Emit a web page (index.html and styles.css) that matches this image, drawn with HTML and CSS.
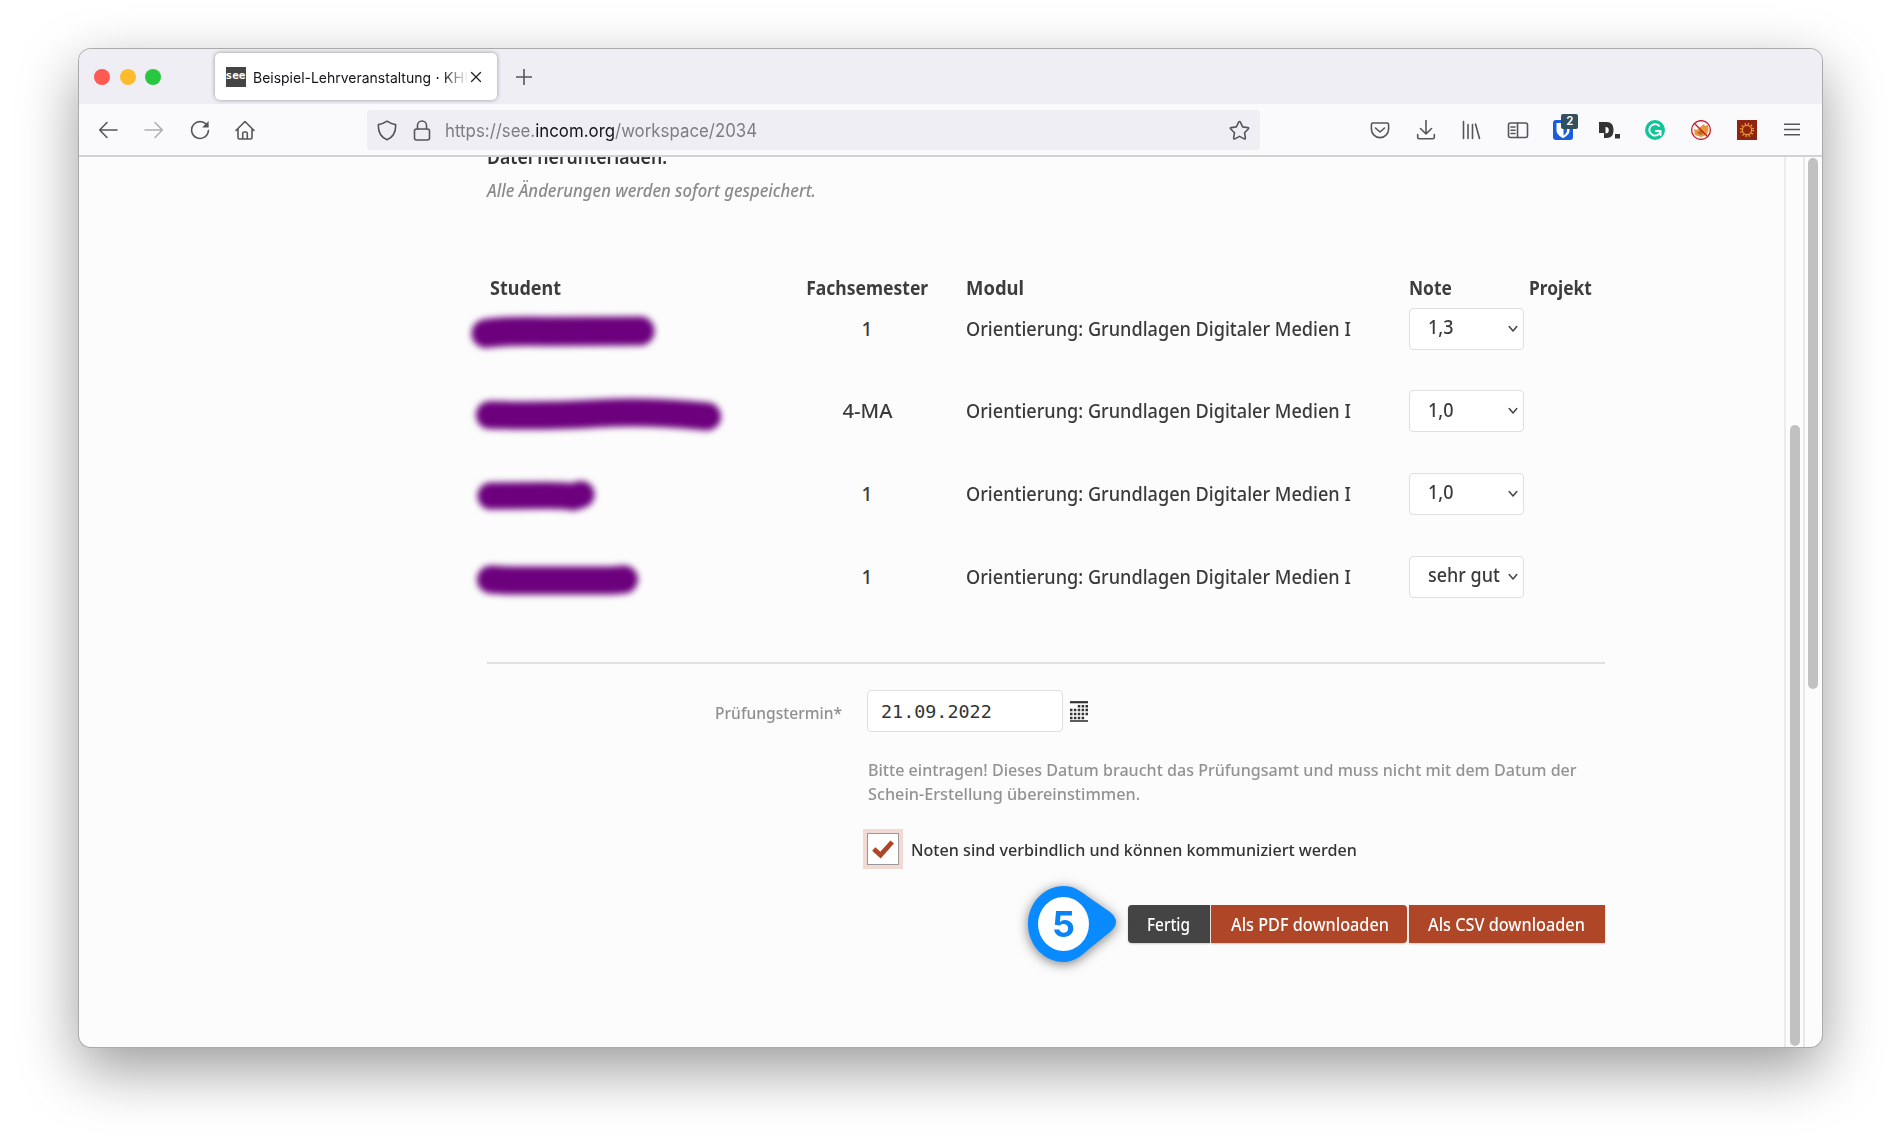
FILE: index.html
```html
<!DOCTYPE html>
<html lang="de">
<head>
<meta charset="utf-8">
<title>Beispiel-Lehrveranstaltung</title>
<link rel="stylesheet" href="styles.css">
</head>
<body>
<div class="window">
  <header class="tabstrip">
    <div class="lights"><i class="red"></i><i class="yellow"></i><i class="green"></i></div>
    <div class="tab">
      <span class="favicon">see</span>
      <span class="tab-title"><span class="fit t-tab">Beispiel-Lehrveranstaltung</span></span><span class="tab-rest">· KHÜ</span>
      <svg class="close" width="12" height="12" viewBox="0 0 12 12"><path d="M1.500 1.500l9 9m0-9l-9 9"/></svg>
    </div>
    <svg class="plus" width="16" height="16" viewBox="0 0 16 16"><path d="M8 .5v15M.5 8h15"/></svg>
  </header>
  <nav class="toolbar">
    <div class="group">
      <span class="tool"><svg width="20" height="20" viewBox="0 0 20 20"><path d="M19 10H2M9 2.500L1.700 10 9 17.500"/></svg></span>
      <span class="tool dim"><svg width="20" height="20" viewBox="0 0 20 20"><path d="M1 10h17M11 2.500L18.300 10 11 17.500"/></svg></span>
      <span class="tool"><svg width="20" height="20" viewBox="0 0 20 20"><path d="M17.500 6.200A8.400 8.400 0 1 0 18.400 10.500"/><path class="solid" d="M18.600 1v6.500h-6.500z"/></svg></span>
      <span class="tool"><svg width="20" height="20" viewBox="0 0 20 20"><path d="M1 10.500L10 1.500l9 9M3 9v8.500q0 1.500 1.500 1.500h11q1.500 0 1.500-1.500V9M7.700 19v-5.500q0-1.500 1.500-1.500h1.600q1.500 0 1.500 1.500V19"/></svg></span>
    </div>
    <div class="urlbar">
      <svg width="20" height="21" viewBox="0 0 20 21"><path d="M10 1.200C12.500 3 15 4 18.600 4.600 19 11 16.500 17 10 19.800 3.500 17 1 11 1.400 4.600 5 4 7.500 3 10 1.200z"/></svg>
      <svg class="lock" width="18" height="21" viewBox="0 0 18 21"><rect x="1.500" y="9" width="15" height="11" rx="2"/><path d="M4.500 9V5.500a4.500 4.500 0 0 1 9 0V9"/></svg>
      <span class="url"><span class="fit t-url">https://see.<b>incom.org</b>/workspace/2034</span></span>
      <svg class="star" width="21" height="21" viewBox="0 0 21 21"><path d="M10.500 1.500q.6 0 .9.700l2.200 4.700 5.200.7q1.400.3.500 1.400l-3.800 3.700.9 5.200q.1 1.500-1.200 1l-4.700-2.500-4.700 2.500q-1.300.5-1.200-1l.9-5.200L1.700 9q-.9-1.100.5-1.400l5.200-.7 2.200-4.700q.3-.7.900-.7z"/></svg>
    </div>
    <div class="group end">
      <span class="tool"><svg width="20" height="20" viewBox="0 0 20 20"><path d="M3 3h14q1.600 0 1.600 1.600V9a8.600 8.600 0 0 1-17.200 0V4.600Q1.400 3 3 3zM5.500 8l4.500 4 4.500-4"/></svg></span>
      <span class="tool"><svg width="20" height="20" viewBox="0 0 20 20"><path d="M10 0v13.500M4.500 8.500L10 14l5.500-5.500M1.700 14.500v2.800q0 1.500 1.500 1.500h13.600q1.500 0 1.500-1.500v-2.800"/></svg></span>
      <span class="tool"><svg width="20" height="20" viewBox="0 0 20 20"><path d="M1.500 1.500v17M6 4.500v14M10.500 4.500v14M13.500 4l4 14.500"/></svg></span>
      <span class="tool"><svg width="22" height="20" viewBox="0 0 22 20"><rect x="1.500" y="3" width="19" height="14.500" rx="2"/><path d="M10.500 3v14.500M4 7h4M4 10.300h4M4 13.500h4"/></svg></span>
      <span class="tool badge-host"><svg width="20" height="20" viewBox="0 0 20 20"><rect class="bw" width="20" height="20" rx="3"/><path class="white" d="M3.500 3h13v7.500c0 3.500-3.500 6-6.500 7.800-3-1.800-6.500-4.300-6.500-7.800z"/><path class="bw" d="M10.500 5h3.500v5.500c0 2-1.500 3.600-3.500 5z"/></svg><em class="badge">2</em></span>
      <span class="tool"><svg width="22" height="20" viewBox="0 0 22 20"><path class="ink" fill-rule="evenodd" d="M1 2h7.500c5 0 7 3 7 8s-2 8-7 8H6v-5H1zM7.500 7v6.500q3.300 0 3.300-3.300T7.500 7z"/><rect class="ink" x="17" y="14" width="5" height="4.500"/></svg></span>
      <span class="tool"><svg width="20" height="20" viewBox="0 0 20 20"><circle class="gr" cx="10" cy="10" r="10"/><path class="gline" d="M14 5.800A5.700 5.700 0 1 0 15.600 11H11M15.600 11v4"/></svg></span>
      <span class="tool"><svg width="22" height="20" viewBox="0 0 22 20"><path class="fox" d="M4 9l3 1 3-3 4-3 1 2 3-1 .5 5-2 5-5.500 2-6-2z"/><path class="fox2" d="M7 13l4-3 3 2-3 3z"/><circle class="ban" cx="11" cy="10" r="9.400"/><path class="ban" d="M4.500 3.500l13 13"/></svg></span>
      <span class="tool"><svg width="20" height="20" viewBox="0 0 20 20"><rect class="rust" width="20" height="20"/><circle class="gear" cx="10" cy="10" r="4.600"/><circle class="teeth" cx="10" cy="10" r="6.200"/></svg></span>
      <span class="tool"><svg width="16" height="16" viewBox="0 0 16 16"><path d="M.5 2.200h15M.5 7.500h15M.5 12.800h15"/></svg></span>
    </div>
  </nav>
  <div class="viewport">
    <main>
      <p class="lead"><span class="fit t-lead">Datei herunterladen.</span></p>
      <p class="saved"><span class="fit t-saved">Alle Änderungen werden sofort gespeichert.</span></p>
      <div class="grid head">
        <span class="pad"><span class="fit t-student">Student</span></span>
        <span class="mid"><span class="fit t-semester">Fachsemester</span></span>
        <span><span class="fit t-modul">Modul</span></span>
        <span><span class="fit t-note">Note</span></span>
        <span><span class="fit t-note">Projekt</span></span>
      </div>
      <div class="grid row">
        <svg class="blot" width="281" height="42"><path stroke-width="29" d="M-1 25.500Q20 22.500 60 23.500L153 23"/></svg>
        <span class="mid">1</span>
        <span><span class="fit t-cell">Orientierung: Grundlagen Digitaler Medien I</span></span>
        <span class="select"><span class="fit t-grade">1,3</span><svg width="10" height="8" viewBox="0 0 10 8"><path d="M1.200 1.500L5 6l3.800-4.500"/></svg></span>
      </div>
      <div class="grid row">
        <svg class="blot" width="281" height="42"><path stroke-width="28" d="M3 25Q60 26.500 110 23.500T220 26.500"/></svg>
        <span class="mid"><span class="fit t-ma">4-MA</span></span>
        <span><span class="fit t-cell">Orientierung: Grundlagen Digitaler Medien I</span></span>
        <span class="select"><span class="fit t-grade">1,0</span><svg width="10" height="8" viewBox="0 0 10 8"><path d="M1.200 1.500L5 6l3.800-4.500"/></svg></span>
      </div>
      <div class="grid row">
        <svg class="blot" width="281" height="42"><path stroke-width="27" d="M4 23L60 22.500Q78 22.500 86 24L94 21.500"/></svg>
        <span class="mid">1</span>
        <span><span class="fit t-cell">Orientierung: Grundlagen Digitaler Medien I</span></span>
        <span class="select"><span class="fit t-grade">1,0</span><svg width="10" height="8" viewBox="0 0 10 8"><path d="M1.200 1.500L5 6l3.800-4.500"/></svg></span>
      </div>
      <div class="grid row">
        <svg class="blot" width="281" height="42"><path stroke-width="28" d="M4 23.500L20 24.500 125 24.500 137 23.500"/></svg>
        <span class="mid">1</span>
        <span><span class="fit t-cell">Orientierung: Grundlagen Digitaler Medien I</span></span>
        <span class="select"><span class="fit t-grade">sehr gut</span><svg width="10" height="8" viewBox="0 0 10 8"><path d="M1.200 1.500L5 6l3.800-4.500"/></svg></span>
      </div>
      <hr>
      <div class="field">
        <label><span class="fit t-label">Prüfungstermin*</span></label>
        <span class="date">21.09.2022</span>
        <svg class="cal" width="18" height="21" viewBox="0 0 18 21"><path d="M0 1.200h18"/><path class="thin" d="M0 20h18"/><path class="dots" d="M7.800 5.200h10.200M0 9.100h18M0 13h18M0 16.900h14.500"/></svg>
      </div>
      <div class="hint">
        <span class="fit t-hint">Bitte eintragen! Dieses Datum braucht das Prüfungsamt und muss nicht mit dem Datum der</span><br>
        <span class="fit t-hint2">Schein-Erstellung übereinstimmen.</span>
      </div>
      <div class="check">
        <span class="box"><svg width="22" height="19" viewBox="0 0 22 19"><path d="M1.800 9l6.700 6L20.200 2"/></svg></span>
        <span class="fit t-check">Noten sind verbindlich und können kommuniziert werden</span>
      </div>
      <div class="actions">
        <svg class="marker" width="90" height="78" viewBox="0 0 90 78"><path class="drop" d="M36 1C45 1 51 5 59 11L82 27Q88 32 88 37T82 47L61 64C52 72 45 77 36 77 16 77 0 60 0 39S16 1 36 1z"/><ellipse class="white" cx="35.500" cy="39" rx="25.500" ry="27"/><text x="35.500" y="52" text-anchor="middle">5</text></svg>
        <span class="btn dark"><span class="fit t-fertig">Fertig</span></span>
        <span class="btn pdf"><span class="fit t-btn">Als PDF downloaden</span></span>
        <span class="btn"><span class="fit t-btn">Als CSV downloaden</span></span>
      </div>
    </main>
    <div class="track inner"><i></i></div>
    <div class="track outer"><i></i></div>
  </div>
</div>
</body>
</html>
```
FILE: styles.css
```css
* { box-sizing: border-box; }
body { margin: 0; height: 1141px; overflow: hidden; background: #fff; font-family: "Noto Sans", sans-serif; font-weight: 500; color: #3a3a3a; display: flow-root; }
svg { display: block; flex: none; fill: none; stroke: #55555d; stroke-width: 1.6; stroke-linecap: round; stroke-linejoin: round; }
.window { width: 1743.500px; height: 998px; margin: 49px 0 0 78.500px; border-radius: 12px; overflow: hidden; background: #fcfcfc; display: flex; flex-direction: column; box-shadow: 0 0 0 1px #aaa, 0 22px 60px rgba(0,0,0,.4); }

/* Condensed text: each class sets the horizontal scale of its label */
.fit { display: inline-block; white-space: nowrap; transform-origin: 0 50%; }
.t-tab { transform: scaleX(.964); }
.t-url { transform: scaleX(.936); }
.t-lead { transform: scaleX(.929); }
.t-saved { transform: scaleX(.927); }
.t-student { transform: scaleX(.946); }
.t-semester { transform: scaleX(.922); transform-origin: 50% 50%; }
.t-modul { transform: scaleX(.970); }
.t-note { transform: scaleX(.912); }
.t-cell { transform: scaleX(.953); }
.t-grade { transform: scaleX(.945); }
.t-ma { transform: scaleX(1.067); transform-origin: 50% 50%; }
.t-label { transform: scaleX(.917); }
.t-hint { transform: scaleX(.946); }
.t-hint2 { transform: scaleX(.955); }
.t-check { transform: scaleX(.948); }
.t-fertig { transform: scaleX(.854); }
.t-btn { transform: scaleX(.903); }

.tabstrip { height: 55px; flex: none; background: #efeef4; display: flex; align-items: center; }
.lights { display: flex; gap: 9.500px; margin: 0 54px 0 15.500px; }
.lights i { width: 16px; height: 16px; border-radius: 50%; }
.red { background: #ff5a52; }
.yellow { background: #fdbc2e; }
.green { background: #27c840; }
.tab { width: 282px; height: 47px; border-radius: 5px; background: #fff; box-shadow: 0 0 4px rgba(0,0,0,.38); display: flex; align-items: center; padding-left: 10.500px; color: #15141a; font: 14.500px Inter, sans-serif; }
.favicon { width: 20px; height: 20px; background: #444; color: #fff; font: bold 11px/17px "DejaVu Sans Mono", monospace; text-align: center; margin-right: 7px; }
.tab-title { width: 183px; margin-top: 2px; }
.tab-rest { width: 32px; margin-top: 2px; overflow: hidden; white-space: nowrap; -webkit-mask-image: linear-gradient(90deg,#000 20%,transparent); mask-image: linear-gradient(90deg,#000 20%,transparent); }
.close { stroke: #222; stroke-width: 1.3; margin-left: 2px; }
.plus { margin-left: 19px; }

.toolbar { height: 53px; flex: none; background: #fafafc; border-bottom: 2px solid #d2d2d4; display: flex; align-items: center; padding-top: 1px; }
.group { display: flex; margin-left: 7px; }
.tool { width: 45.700px; display: flex; justify-content: center; align-items: center; }
.dim { opacity: .45; }
.solid { fill: #55555d; stroke: none; }
.urlbar { width: 893px; height: 40px; margin-left: 98.700px; background: #efeef3; border-radius: 4px; display: flex; align-items: center; padding: 0 10px; }
.lock { margin-left: 16px; }
.url { flex: 1; margin-left: 14.500px; font: 18px Inter, sans-serif; color: #7d7d84; }
.url b { font-weight: 400; color: #15141a; }
.end { margin-left: 97.300px; }
.end .tool { width: 45.800px; }
.badge-host { position: relative; }
.badge { position: absolute; left: 21px; top: -6px; width: 17px; height: 15px; border-radius: 2px; background: #33505f; color: #fff; font: 600 11.500px/15px Inter, sans-serif; text-align: center; }
.bw { fill: #175ddc; stroke: none; }
.white { fill: #fff; stroke: none; }
.ink { fill: #333; stroke: none; }
.gr { fill: #15c39a; stroke: none; }
.gline { stroke: #fff; stroke-width: 1.9; }
.fox { fill: #e8963a; stroke: none; }
.fox2 { fill: #b9692a; stroke: none; }
.ban { stroke: #cc1420; stroke-width: 1.3; }
.rust { fill: #8f2410; stroke: none; }
.gear { stroke: #e8993a; stroke-width: 1.3; }
.teeth { stroke: #e8993a; stroke-width: 2; stroke-dasharray: 1.3 1.95; stroke-linecap: butt; }

.viewport { flex: 1; min-height: 0; display: flex; overflow: hidden; }
main { width: 1118px; margin: -16.500px 179px 0 408px; flex: none; }
p { margin: 0; line-height: 33px; }
.lead { font-size: 19px; font-weight: 600; color: #333; }
.saved { font-size: 18px; font-style: italic; color: #8a8a8a; }
.grid { display: grid; grid-template-columns: 281px 198px 443.500px 120px 75px; font-size: 19px; }
.head { margin-top: 61px; height: 40px; line-height: 40px; font-weight: 700; color: #3d3d3d; }
.pad { padding-left: 3px; }
.mid { text-align: center; padding-left: 1px; }
.row { height: 82.700px; line-height: 42px; }
.blot { overflow: visible; stroke: #6c007d; filter: blur(3.200px); }
.select { width: 115px; height: 42px; background: #fff; border: 1.500px solid #dfdfdf; border-radius: 4px; display: flex; justify-content: space-between; align-items: center; padding: 0 5px 0 18px; line-height: 37px; }
.select svg { stroke-width: 1.5; stroke: #444; }
.select .fit { width: 70px; margin-top: -2px; }
hr { border: 0; height: 2px; background: #e0e0e0; margin: 23.500px 0 26.500px; }
.field { display: flex; align-items: center; height: 42px; font-size: 17px; color: #8f8f8f; }
label { width: 380.500px; padding-left: 228.500px; padding-top: 3px; }
.date { width: 196px; height: 42px; border: 1.500px solid #dfdfdf; border-radius: 4px; background: #fff; padding-left: 13px; font: 18.400px/41px "DejaVu Sans Mono", monospace; color: #333; }
.cal { margin-left: 7px; stroke: #333; stroke-width: 2.2; stroke-linecap: butt; }
.thin { stroke-width: 1.6; }
.dots { stroke-width: 2.5; stroke-dasharray: 2.5 1.370; }
.hint { margin: 26px 0 0 381px; font-size: 17px; line-height: 24px; color: #929292; white-space: nowrap; }
.check { margin: 23px 0 0 376px; height: 40px; display: flex; align-items: center; font-size: 17px; color: #333; }
.box { width: 40px; height: 40px; background: #fff; border: 4px solid #f3d9d3; outline: 1.500px solid #999; outline-offset: -5px; display: grid; place-items: center; margin-right: 8.500px; }
.box svg { stroke: #ae4527; stroke-width: 4.8; stroke-linecap: butt; stroke-linejoin: miter; }
.actions { display: flex; justify-content: flex-end; align-items: center; height: 78px; margin-top: 16px; gap: 1.500px; }
.marker { margin-right: 8px; overflow: visible; filter: drop-shadow(0 2px 6px rgba(0,0,0,.5)); }
.drop { fill: #0a8aff; stroke: none; }
.marker text { fill: #0a84f5; stroke: none; font: 700 36px Inter, sans-serif; }
.btn { width: 196px; height: 38px; line-height: 38px; background: #ae4627; color: #fff; font-size: 18px; padding-left: 19.500px; box-shadow: 0 1px 2px rgba(0,0,0,.2); }
.dark { width: 82px; background: #444; border-radius: 4px 0 0 4px; }
.pdf { border-radius: 0 4px 4px 0; }
.track i { display: block; width: 10px; border-radius: 5px; background: #c1c1c1; }
.inner { width: 21px; border-left: 2px solid #ebebeb; border-right: 2px solid #e8e8e8; padding: 268px 0 0 4px; }
.inner i { height: 621px; }
.outer { padding: 1px 0 0 3.500px; }
.outer i { height: 531px; }
```
